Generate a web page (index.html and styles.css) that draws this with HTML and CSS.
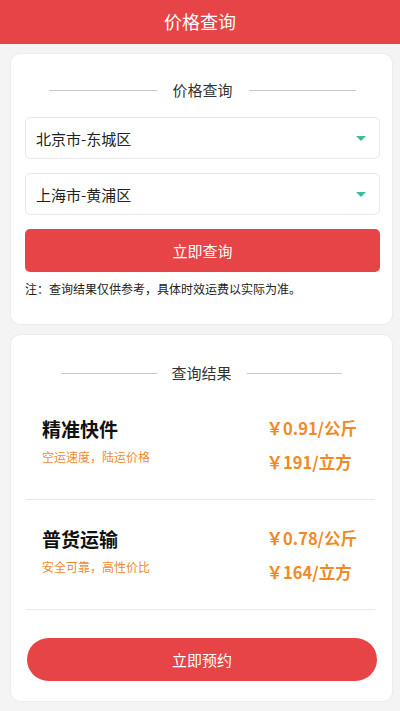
FILE: index.html
```html
<!DOCTYPE html>
<html lang="zh-CN">
<head>
<meta charset="utf-8">
<title>价格查询</title>
<link rel="stylesheet" href="styles.css">
</head>
<body>
<header class="topbar">价格查询</header>

<section class="card card-query">
  <div class="sec-title"><span class="line"></span><span class="sec-text">价格查询</span><span class="line"></span></div>
  <div class="select"><span class="select-text">北京市-东城区</span><span class="caret"></span></div>
  <div class="select"><span class="select-text">上海市-黄浦区</span><span class="caret"></span></div>
  <button class="btn-query">立即查询</button>
  <p class="note">注：查询结果仅供参考，具体时效运费以实际为准。</p>
</section>

<section class="card card-result">
  <div class="sec-title sec-title-result"><span class="line"></span><span class="sec-text">查询结果</span><span class="line"></span></div>
  <div class="items">
    <div class="item">
      <div class="item-left">
        <div class="item-name">精准快件</div>
        <div class="item-desc">空运速度，陆运价格</div>
      </div>
      <div class="item-right">
        <div class="price">￥0.91/公斤</div>
        <div class="price">￥191/立方</div>
      </div>
    </div>
    <div class="item">
      <div class="item-left">
        <div class="item-name">普货运输</div>
        <div class="item-desc">安全可靠，高性价比</div>
      </div>
      <div class="item-right">
        <div class="price">￥0.78/公斤</div>
        <div class="price">￥164/立方</div>
      </div>
    </div>
  </div>
  <button class="btn-book">立即预约</button>
</section>
</body>
</html>
```

FILE: styles.css
```css
* { box-sizing: border-box; }
html, body { margin: 0; padding: 0; }
body {
  background: #f4f4f4;
  font-family: "Noto Sans CJK SC", "Noto Sans", sans-serif;
  color: #222;
  width: 400px;
  height: 711px;
  overflow: hidden;
}
.topbar {
  height: 44px;
  background: #e64447;
  color: #fff;
  font-size: 18px;
  line-height: 42px;
  text-align: center;
}
.card {
  background: #fff;
  border-radius: 9px;
  margin: 10px 8px 0 11px;
  box-shadow: 0 0 0 1px #ececec;
}
.card-query { padding: 25px 12px 26px 14px; }
.card-result { padding: 27px 0 20px 0; margin-top: 11px; }
.sec-title {
  display: flex;
  align-items: center;
  gap: 16px;
  height: 22px;
  padding: 0 24px;
  margin-bottom: 16px;
}
.sec-title-result { padding: 0 50px; gap: 15px; margin-bottom: 6px; }
.line { flex: 1; height: 1px; background: #c8c8c8; }
.sec-text { font-size: 15px; color: #333; line-height: 22px; }
.select {
  display: flex;
  align-items: center;
  justify-content: space-between;
  height: 42px;
  border: 1px solid #e8e8e8;
  border-radius: 5px;
  padding: 0 13px 0 10px;
  margin-bottom: 14px;
}
.select-text { font-size: 15px; color: #222; }
.caret {
  width: 0; height: 0;
  border-left: 5px solid transparent;
  border-right: 5px solid transparent;
  border-top: 5px solid #3dbb9c;
}
.btn-query {
  display: block;
  width: 100%;
  height: 43px;
  border: none;
  border-radius: 5px;
  background: #e64447;
  color: #fff;
  font-family: inherit;
  font-size: 15px;
  margin: 0;
}
.note {
  margin: 8px 0 0 0;
  font-size: 12px;
  line-height: 18px;
  color: #222;
}
.items { margin: 0 17px 0 15px; }
.item {
  display: flex;
  justify-content: space-between;
  align-items: flex-start;
  padding: 26px 18px 25px 16px;
  border-bottom: 1px solid #e8e8e8;
}
.item-name { font-size: 19px; font-weight: 700; line-height: 26px; color: #111; }
.item-desc { font-size: 12px; line-height: 16px; color: #ee8b35; margin-top: 7px; }
.item-right { display: flex; flex-direction: column; align-items: flex-start; gap: 10px; }
.price { font-size: 16.5px; font-weight: 700; line-height: 24px; color: #f08a26; }
.btn-book {
  display: block;
  width: calc(100% - 31px);
  margin: 28px 15px 0 16px;
  height: 43px;
  border: none;
  border-radius: 22px;
  background: #e64447;
  color: #fff;
  font-family: inherit;
  font-size: 15px;
}
```
